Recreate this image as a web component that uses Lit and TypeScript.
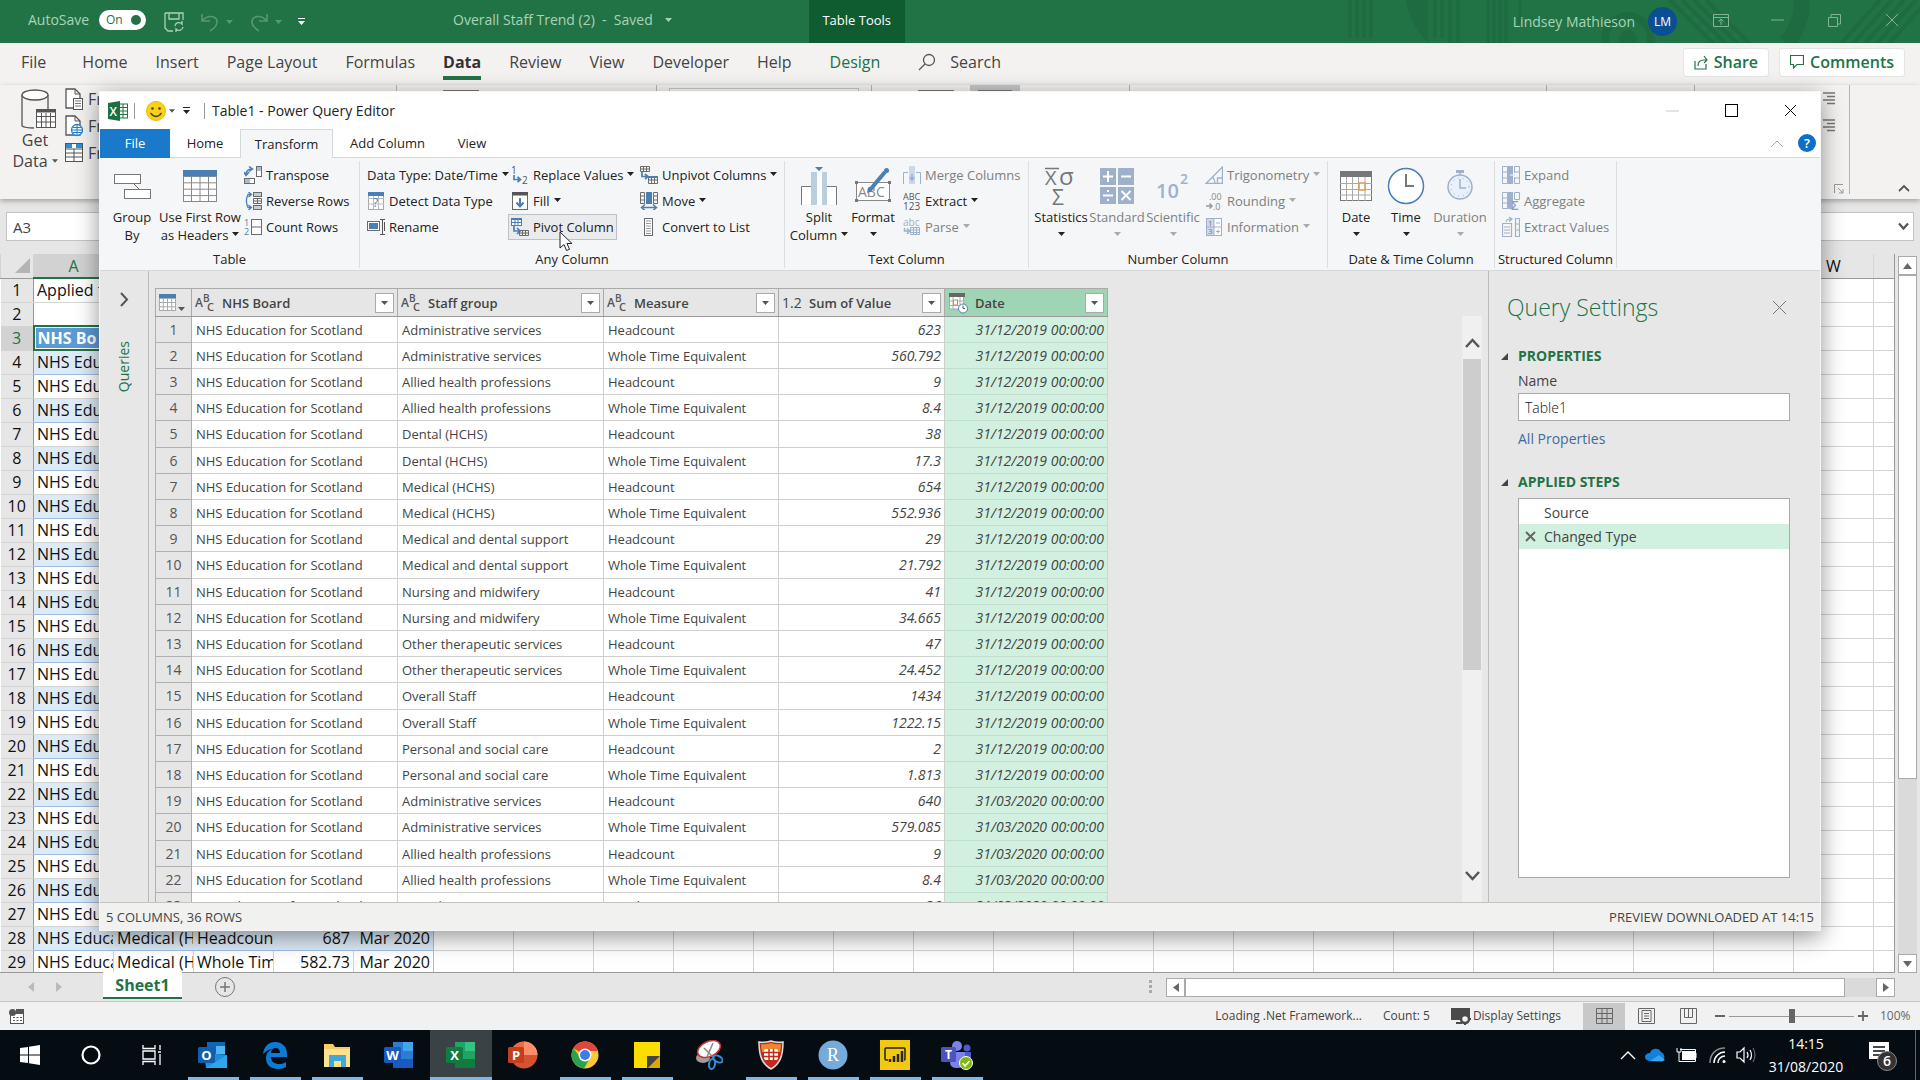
import { LitElement, html, svg, css, nothing } from "lit";
import { customElement } from "lit/decorators.js";

const B = "#4a7fb5";
const G = "#6b6b6b";
const L = "#9fb0cb";

const icon = (w: number, h: number, body: unknown) =>
  html`<svg width=${w} height=${h} viewBox="0 0 ${w} ${h}" fill="none" aria-hidden="true">${body}</svg>`;

const caret = (color = "#222", w = 7) =>
  html`<svg class="caret" width=${w} height="4" viewBox="0 0 7 4" aria-hidden="true"><path d="M0 0h7L3.500 4z" fill=${color} /></svg>`;

const xIcon = (s: number, color: string, sw = 1) =>
  icon(s, s, svg`<path d="M1 1L${s - 1} ${s - 1}M${s - 1} 1L1 ${s - 1}" stroke=${color} stroke-width=${sw} />`);

const chevUp = (color: string, sw = 1) => icon(14, 9, svg`<path d="M1 8l6-6 6 6" stroke=${color} stroke-width=${sw} />`);

const gridIcon = (w: number, h: number, c: number, r: number, line: string, head: string) => {
  const lines: unknown[] = [];
  for (let i = 1; i < c; i++) lines.push(svg`<path d="M${(w / c) * i} 1V${h - 1}" stroke=${line} />`);
  for (let i = 1; i < r; i++) lines.push(svg`<path d="M1 ${(h / r) * i}H${w - 1}" stroke=${line} />`);
  return icon(w, h, svg`<rect x=".5" y=".5" width=${w - 1} height=${h - 1} fill="#fff" stroke=${line} />${lines}<rect width=${w} height=${h / r} fill=${head} />`);
};

const ICONS: Record<string, unknown> = {
  groupBy: icon(38, 34, svg`<path d="M19 13l9 9" stroke="#666"/><rect x="1.500" y="5.500" width="26" height="9" fill="#fff" stroke="#777"/><rect x="11.500" y="20.500" width="26" height="9" fill="#fff" stroke="#777"/>`),
  firstRow: gridIcon(34, 32, 4, 5, "#888", B),
  transpose: icon(18, 18, svg`<path d="M2 9Q2 3 8 3M5 .5L8.500 3 5 5.500M-.2 6L2 9.500 5 6" stroke=${B} stroke-width="1.500"/><rect x="12.500" y=".5" width="5" height="10" fill="#fff" stroke=${G}/><rect x="13" y="1" width="4" height="4" fill="#a8bdd2"/><rect x=".5" y="12.500" width="10" height="5" fill="#fff" stroke=${G}/><rect x="1" y="13" width="5" height="4" fill="#a8bdd2"/>`),
  reverse: icon(18, 18, svg`<path d="M7 2.500H4Q.8 9 4 15.500H7M4.500 0L7.500 2.500 4.500 5M4.500 13l3 2.500-3 2.500" stroke=${B} stroke-width="1.300"/><rect x="9.500" y=".5" width="8" height="4" fill="#c0cfcb" stroke=${G}/><path d="M9.500 6.500h8v5h-8zM9.500 9h8M13.500 6.500v5" stroke=${G}/><rect x="9.500" y="13.500" width="8" height="4" fill="#c9cdd6" stroke=${G}/>`),
  count: icon(18, 18, svg`<text x="0" y="8" class="it" font-size="9" fill=${B}>1</text><text x="0" y="17" class="it" font-size="9" fill=${B}>2</text><rect x="7.500" y="1.500" width="10" height="15" fill="#fff" stroke=${G}/><path d="M7 9h11" stroke=${G}/>`),
  detect: icon(18, 18, svg`<rect x="1.500" y=".5" width="15" height="17" fill="#fff" stroke="#aaa"/><path d="M1 6.500h16M1 12h16M6.500 1v16M11.500 1v16" stroke="#bbb"/><rect x="1" width="16" height="4" fill=${B}/><text x="6" y="15" class="it" font-size="12" fill=${B}>?</text>`),
  rename: icon(18, 18, svg`<rect x=".5" y="3.500" width="12" height="9" fill="#fff" stroke=${G}/><rect x="2" y="5" width="9" height="6" fill=${B}/><path d="M13 1.500h5M13 16.500h5M15.500 2v14M17.500 4v9" stroke="#555"/>`),
  replace: icon(18, 18, svg`<text x="0" y="8" class="it" font-size="10" fill="#555">1</text><text x="11" y="18" class="it" font-size="10" fill="#555">2</text><path d="M3 9v4.500h6M6.500 11l3 2.500-3 2.500" stroke=${B} stroke-width="1.700"/>`),
  fill: icon(18, 18, svg`<rect x="1.500" y=".5" width="15" height="17" fill="#fff" stroke=${G}/><rect x="1" width="16" height="3.500" fill="#555"/><path d="M9 6v9M5.500 10.500L9 14.500l3.500-4" stroke=${B} stroke-width="2"/>`),
  pivot: icon(18, 18, svg`<rect x=".5" y=".5" width="10" height="7" fill="#fff" stroke=${B}/><path d="M0 1.500h11M1 4.500h9M4 2v5M7 2v5" stroke=${B}/><path d="M3 8v5h5M6 10l3 3-3 3" stroke=${B} stroke-width="1.700"/><path d="M8.500 12.500h9v5h-9zM8.500 15h9M11.500 12.500v5M14.500 12.500v5" stroke=${G}/>`),
  unpivot: icon(18, 18, svg`<path d="M.5 .5h9v5h-9zM.5 3h9M3.500 .5v5M6.500 .5v5" stroke=${G}/><path d="M2 6v4.500h5M5 8l3 2.500-3 2.500" stroke=${B} stroke-width="1.700"/><path d="M8.500 10.500h9v7h-9zM8.500 14h9M11.500 11v6M14.500 11v6" stroke=${G}/><path d="M8 11h10" stroke=${B} stroke-width="2"/>`),
  move: icon(18, 18, svg`<path d="M.5 .5h4v11h-4zM.5 4h4M.5 8h4M13.500 .5h4v11h-4zM13.500 4h4M13.500 8h4" stroke=${G}/><rect x="6" width="6" height="12" fill=${B}/><path d="M2 15.500h14M5 12.500l-3.500 3 3.500 3M13 12.500l3.500 3-3.500 3" stroke=${B} stroke-width="1.500"/>`),
  list: icon(18, 18, svg`<rect x="4.500" y=".5" width="8" height="17" fill="#fff" stroke=${G}/><path d="M6 3h5M6 5.500h5M6 8h5M6 10.500h5M6 13h5M6 15.500h5" stroke="#999"/>`),
  split: icon(36, 38, svg`<rect x=".5" y="19.500" width="11" height="18" fill="#fff"/><rect x="24.500" y="19.500" width="11" height="18" fill="#fff"/><path d="M.5 38V19.500H10M35.500 38V19.500H26" stroke="#777"/><rect x="10" y="5" width="6" height="33" fill="#b9cfe0"/><rect x="16" y="5" width="5" height="33" fill="#fff"/><rect x="21" y="5" width="5" height="33" fill="#b9cfe0"/><path d="M14 0h8l-4 4z" fill=${B}/>`),
  format: icon(36, 36, svg`<rect x="1.500" y="14.500" width="33" height="18" fill="#fff" stroke="#888"/><text x="3" y="29" class="it" font-size="14" fill="#888">ABC</text><path d="M0 13h3v3H0zM33 13h3v3h-3zM0 31h3v3H0zM33 31h3v3h-3z" fill="#777"/><path d="M14 23L30 4" stroke=${B} stroke-width="4"/><path d="M12 25l1-5 4 3z" fill=${B}/><circle cx="31.500" cy="2.500" r="2.500" fill=${B}/>`),
  merge: icon(18, 18, svg`<path d="M.5 18V6.500H5M17.500 18V6.500H13" stroke=${L}/><rect x="6" y="0" width="6" height="18" fill="#cdd7e8"/><path d="M9 8v5M6.500 11L9 14l2.500-3" stroke=${L} stroke-width="1.500"/>`),
  extract: icon(18, 18, svg`<text x="0" y="8" class="it" font-size="9" fill="#555">ABC</text><text x="0" y="18" class="it" font-size="10" fill="#555">123</text>`),
  parse: icon(18, 18, svg`<text x="0" y="8" class="it" font-size="10" fill=${L}>abc</text><path d="M1.500 10v3h4M4 10.500l2.500 2.500L4 16" stroke=${L} stroke-width="1.500"/><path d="M7.500 9.500h9v7h-9zM7.500 12h9M7.500 14.500h9M10.500 9.500v7M13.500 9.500v7" stroke=${L}/>`),
  stats: icon(34, 38, svg`<text x="1" y="18" class="it" font-size="20" fill="#777">X</text><path d="M1 1.500h14" stroke="#777" stroke-width="1.500"/><text x="15" y="18" class="it" font-size="24" fill="#777">σ</text><text x="8" y="38" class="it" font-size="21" fill="#777">Σ</text>`),
  standard: icon(34, 38, svg`<path d="M0 1h16v17H0zM18 1h16v17H18zM0 20h16v17H0zM18 20h16v17H18z" fill=${L}/><path d="M3 9.500h10M8 4v11M21 9.500h10M3 28.500h10M21.500 24l9 9M30.500 24l-9 9" stroke="#fff" stroke-width="2"/><path d="M7 23h2v2H7zM7 32h2v2H7z" fill="#fff"/>`),
  sci: icon(34, 38, svg`<text x="0" y="31" class="it ib" font-size="20" fill=${L}>10</text><text x="24" y="17" class="it ib" font-size="14" fill=${L}>2</text>`),
  trig: icon(18, 18, svg`<path d="M1 17.500L17.500 1v16.500zM10 17c0-3-1-4-2.500-6M12.500 17v-5h5" stroke=${L} stroke-width="1.300"/>`),
  round: icon(18, 18, svg`<text x="4" y="8" class="it" font-size="9" fill="#888">.00</text><text x="8" y="18" class="it" font-size="9" fill="#888">.0</text><path d="M1 14h6M4.500 11.500L7 14l-2.500 2.500" stroke="#999" stroke-width="1.500"/>`),
  info: icon(18, 18, svg`<rect x="1.500" y=".5" width="15" height="17" stroke=${L} fill="#fff"/><rect x="2" y="1" width="7" height="16" fill="#cfd9e8"/><path d="M9 1v16M2 9h15M11 5h4M11 13.500h4M13 11.500v4" stroke=${L}/><text x="3" y="8" class="it" font-size="8" fill="#778">1</text><text x="3" y="16" class="it" font-size="8" fill="#778">3</text>`),
  date: icon(34, 34, svg`<rect x="1.500" y="3.500" width="31" height="28" fill="#fff" stroke="#777"/><path d="M1 14.500h32M1 20.500h32M1 26h32M7.500 7v25M13.500 7v25M19.500 7v25M26 7v25" stroke="#aaa"/><rect x="1" y="2" width="32" height="6" fill="#777"/><rect x="20" y="14" width="6" height="7" fill="#fff" stroke="#d99a4e" stroke-width="1.500"/>`),
  time: icon(38, 38, svg`<circle cx="19" cy="19" r="17.500" fill="#fff" stroke=${B} stroke-width="1.500"/><path d="M19 7v12h8" stroke="#777" stroke-width="2"/>`),
  duration: icon(34, 38, svg`<circle cx="17" cy="20" r="12" fill="#e8f0fb" stroke=${L} stroke-width="1.500"/><path d="M17 12v9h6M17 5v3" stroke=${L} stroke-width="1.500"/><path d="M13 3h8v3h-8z" fill=${L}/><circle cx="17" cy="20" r="9" stroke=${L} stroke-dasharray="1 4"/>`),
  expand: icon(18, 18, svg`<path d="M.5 .5h5v17h-5zM.5 6h5M.5 12h5M12.500 .5h5v17h-5zM12.500 6h5M12.500 12h5" stroke=${L}/><path d="M6 0h5v18H6z" fill=${L}/><path d="M8 9h6M11.500 6.500L14 9l-2.500 2.500" stroke="#fff"/>`),
  aggregate: icon(18, 18, svg`<path d="M.5 .5h5v16h-5zM.5 6h5M.5 11h5M12.500 .5h5v7h-5z" stroke=${L}/><path d="M6 0h5v17H6z" fill=${L}/><text x="9" y="18" class="it ib" font-size="13" fill="#8c9dba">Σ</text>`),
  values: icon(18, 20, svg`<path d="M.5 6.500h9v13h-9zM2 10h6M2 13h6M2 16h6M13.500 1.500h4v18h-4zM13.500 7h4M13.500 13h4M4 5q0-3 5-3M7 0l3 2-3 2.500" stroke=${L} stroke-width="1.200"/>`),
};

interface Item { i?: string; t: string; c?: boolean; off?: boolean; hot?: boolean }
interface Big { i: string; l: string[]; c?: boolean; off?: boolean; w: string }
interface Group { label: string; cls: string; bigs: Big[]; cols: Item[][] }

const GROUPS: Group[] = [
  { label: "Table", cls: "g-table", bigs: [
      { i: "groupBy", l: ["Group", "By"], w: "w-m" },
      { i: "firstRow", l: ["Use First Row", "as Headers"], c: true, w: "w-l" }],
    cols: [[{ i: "transpose", t: "Transpose" }, { i: "reverse", t: "Reverse Rows" }, { i: "count", t: "Count Rows" }]] },
  { label: "Any Column", cls: "g-any", bigs: [],
    cols: [
      [{ t: "Data Type: Date/Time", c: true }, { i: "detect", t: "Detect Data Type" }, { i: "rename", t: "Rename" }],
      [{ i: "replace", t: "Replace Values", c: true }, { i: "fill", t: "Fill", c: true }, { i: "pivot", t: "Pivot Column", hot: true }],
      [{ i: "unpivot", t: "Unpivot Columns", c: true }, { i: "move", t: "Move", c: true }, { i: "list", t: "Convert to List" }]] },
  { label: "Text Column", cls: "g-text", bigs: [
      { i: "split", l: ["Split", "Column"], c: true, w: "w-m" },
      { i: "format", l: ["Format", ""], c: true, w: "w-t" }],
    cols: [[{ i: "merge", t: "Merge Columns", off: true }, { i: "extract", t: "Extract", c: true }, { i: "parse", t: "Parse", c: true, off: true }]] },
  { label: "Number Column", cls: "g-num", bigs: [
      { i: "stats", l: ["Statistics", ""], c: true, w: "w-s" },
      { i: "standard", l: ["Standard", ""], c: true, off: true, w: "w-s" },
      { i: "sci", l: ["Scientific", ""], c: true, off: true, w: "w-s" }],
    cols: [[{ i: "trig", t: "Trigonometry", c: true, off: true }, { i: "round", t: "Rounding", c: true, off: true }, { i: "info", t: "Information", c: true, off: true }]] },
  { label: "Date & Time Column", cls: "g-date", bigs: [
      { i: "date", l: ["Date", ""], c: true, w: "w-s" },
      { i: "time", l: ["Time", ""], c: true, w: "w-t" },
      { i: "duration", l: ["Duration", ""], c: true, off: true, w: "w-m" }], cols: [] },
  { label: "Structured Column", cls: "g-str", bigs: [],
    cols: [[{ i: "expand", t: "Expand", off: true }, { i: "aggregate", t: "Aggregate", off: true }, { i: "values", t: "Extract Values", off: true }]] },
];

const STAFF = ["Administrative services", "Allied health professions", "Dental (HCHS)", "Medical (HCHS)",
  "Medical and dental support", "Nursing and midwifery", "Other therapeutic services", "Overall Staff", "Personal and social care"];
const VALUES = ["623", "560.792", "9", "8.4", "38", "17.3", "654", "552.936", "29", "21.792", "41", "34.665", "47",
  "24.452", "1434", "1222.15", "2", "1.813", "640", "579.085", "9", "8.4", "36"];
const DATA = VALUES.map((v, n) => [
  "NHS Education for Scotland",
  STAFF[Math.floor((n % 18) / 2)],
  n % 2 ? "Whole Time Equivalent" : "Headcount",
  v,
  n < 18 ? "31/12/2019 00:00:00" : "31/03/2020 00:00:00",
]);

const abc = icon(20, 20, svg`<text x="0" y="14" class="it ib" font-size="12" fill="#555">A</text><text x="8" y="9" class="it ib" font-size="10" fill="#555">B</text><text x="12" y="18" class="it ib" font-size="11" fill="#555">C</text>`);
const dateType = icon(20, 22, svg`<path d="M1 2h15v15H1z" fill="#fff"/><path d="M1 9h15M1 13.500h15M5 5v12M12 5v12M1.500 5v12h14V5" stroke="#aaa"/><rect x="1" y="1" width="16" height="4" fill="#666"/><rect x="5.500" y="8" width="4" height="5" fill="#fff" stroke="#d98a2e"/><circle cx="15" cy="16.500" r="4.500" fill="#fff" stroke=${B}/><path d="M15 13.500v3h2" stroke="#555"/>`);

const COLS = [
  { name: "NHS Board", icon: abc, cls: "c-text" },
  { name: "Staff group", icon: abc, cls: "c-text" },
  { name: "Measure", icon: abc, cls: "c-measure" },
  { name: "Sum of Value", icon: html`<span class="num-type">1.2</span>`, cls: "c-num" },
  { name: "Date", icon: dateType, cls: "c-date" },
];

const reset = css`
  * { box-sizing: border-box; }
  svg { display: block; flex: none; }
  button, input { font: inherit; color: inherit; margin: 0; }
  button { background: none; border: 0; padding: 0; display: flex; align-items: center; justify-content: center; white-space: nowrap; }
  .it { font-family: "Open Sans", sans-serif; }
  .ib { font-weight: 600; }
  .grow { flex: 1; }
`;

@customElement("query-editor")
class QueryEditor extends LitElement {
  static styles = [reset, css`
    :host { display: flex; flex-direction: column; background: #fff; color: #222; font-size: 13px; line-height: 18px;
      box-shadow: 0 6px 22px rgba(0, 0, 0, 0.42); border: 1px solid #f6f6f6; }
    .title { display: flex; align-items: center; height: 37px; padding-left: 8px; font-size: 14px; }
    .sep { width: 1px; height: 16px; background: #999; margin: 0 7px 0 6px; }
    .qat { margin: 0 8px; }
    .smile { gap: 3px; margin-left: 4px; }
    .wb { width: 59px; height: 36px; }
    .tabs { display: flex; height: 29px; border-bottom: 1px solid #d5d8d8; }
    .tabs button { height: 29px; width: 70px; padding-bottom: 1px; }
    .tabs .file { background: #1979ca; color: #fff; }
    .tabs .on { width: 93px; background: #f5f6f7; border: 1px solid #d5d8d8; border-bottom: 0; }
    .tabs .wide { width: 109px; }
    .tabs .view { width: 60px; }
    .tabs .fold { width: 34px; }
    .tabs .help { width: 18px; height: 18px; padding: 0; border-radius: 50%; background: #0e6fc8; color: #fff; font-weight: 600; align-self: center; margin: 0 4px 0 4px; }
    .ribbon { display: flex; height: 113px; padding-top: 3px; background: #f5f6f7; border-bottom: 1px solid #d5d8d8; overflow: hidden; }
    .group { display: flex; flex-direction: column; flex: none; height: 107px; border-right: 1px solid #dcdfdf; }
    .tools { display: flex; height: 89px; }
    .glabel { text-align: center; height: 18px; }
    .g-table { width: 260px; }
    .g-any { width: 425px; }
    .g-text { width: 244px; }
    .g-num { width: 299px; }
    .g-date { width: 167px; }
    .g-str { width: 122px; }
    .big { flex-direction: column; justify-content: flex-start; flex: none; padding-top: 5px; height: 86px; }
    .big .pic { height: 39px; display: flex; align-items: center; }
    .big .l { display: flex; align-items: center; gap: 4px; height: 18px; }
    .big .l.first { padding-top: 3px; height: 21px; }
    .big .l .caret { margin-top: -2px; }
    .w-s { width: 56px; } .w-t { width: 44px; } .w-m { width: 64px; } .w-l { width: 72px; }
    .col { display: flex; flex-direction: column; padding-top: 1px; }
    .row { height: 26px; justify-content: flex-start; gap: 4px; padding: 0 2px; border: 1px solid transparent; position: relative; }
    .row .caret { margin-top: -2px; }
    .row.hot { background: #e9ebec; border-color: #bfc2c2; }
    .off { color: #7d8080; }
    .g-any .col { width: 129px; align-items: flex-start; }
    .g-any .tools { padding-left: 4px; }
    .g-any .col:first-child { width: 144px; }
    .g-table .col, .g-text .col { padding-left: 5px; }
    .g-num .tools { padding-left: 4px; }
    .g-num .col { padding-left: 1px; }
    .g-text .tools { padding-left: 2px; }
    .g-str .tools { padding-left: 4px; }
    .pointer { position: absolute; left: 50px; top: 16px; z-index: 2; }
    .body { display: flex; flex: 1; min-height: 0; background: #e7e7e7; }
    .queries { width: 49px; flex: none; border-right: 1px solid #bbb; display: flex; flex-direction: column; align-items: center; padding-top: 21px; gap: 34px; }
    .queries span { writing-mode: vertical-rl; transform: rotate(180deg); color: #217346; font-size: 14px; }
    .data { flex: 1; min-width: 0; display: flex; overflow: hidden; padding: 17px 6px 0 6px; }
    .tablewrap { flex: 1; min-width: 0; overflow: hidden; }
    table { border-collapse: collapse; table-layout: fixed; width: 952px; }
    th, td { padding: 0 4px; border: 1px solid #d0d0d0; font-weight: 400; text-align: left; overflow: hidden; white-space: nowrap; color: #444; }
    thead th { height: 28px; background: #e6e6e6; border-color: #aaa; border-bottom: 1px solid #999; font-weight: 600; padding: 0 3px; }
    tbody tr { height: 26px; background: #fff; }
    tbody tr:nth-child(5n) { height: 27px; }
    tbody th { background: #e6e6e6; text-align: center; font-size: 14px; color: #555; border-color: #b0b0b0; }
    .c-idx { width: 36px; } .c-text { width: 206px; } .c-measure { width: 175px; } .c-num { width: 166px; } .c-date { width: 163px; }
    td.r { text-align: right; font-style: italic; font-size: 14px; padding-right: 3px; }
    td.d { background: #d2f0df; border-color: #c3dccd; }
    thead th.sel { background: #9fd5b5; }
    .hd { display: flex; align-items: center; gap: 7px; }
    .hd button { margin-left: auto; width: 19px; height: 20px; background: #fff; border: 1px solid #aaa; }
    .num-type { font-weight: 400; font-size: 14px; width: 20px; }
    .corner { gap: 2px; }
    .corner .caret { align-self: flex-end; }
    .vbar { width: 20px; flex: none; margin-top: 28px; background: #f0f0f0; display: flex; flex-direction: column; }
    .vbar button { height: 43px; padding-top: 10px; }
    .vbar .down { padding: 0; height: 52px; }
    .vbar i { flex: 0 1 311px; background: #cdcdcd; margin: 0 1px; }
    .settings { width: 332px; flex: none; border-left: 1px solid #bbb; padding: 19px 30px 24px 12px; display: flex; flex-direction: column; font-size: 14px; line-height: 20px; color: #444; }
    .shead { display: flex; align-items: center; justify-content: space-between; padding: 0 3px 0 6px; height: 34px; }
    h2 { margin: 0; font-size: 23px; font-weight: 300; color: #217346; line-height: 32px; }
    h3 { margin: 0; font-size: 14px; font-weight: 700; color: #217346; display: flex; align-items: center; gap: 10px; }
    .p1 { margin-top: 22px; }
    .p2 { margin-top: 23px; margin-bottom: 6px; }
    .in { margin-left: 17px; }
    label { margin-top: 5px; }
    .name { height: 28px; margin-top: 2px; border: 1px solid #aaa; background: #fff; padding: 0 6px; font-weight: 300; color: #111; border-radius: 0; }
    a { color: #3f6a9f; text-decoration: none; margin-top: 8px; align-self: flex-start; }
    .steps { flex: 1; margin-top: 0; margin-bottom: 0; padding: 0; list-style: none; background: #fff; border: 1px solid #aaa; }
    .steps li { height: 25px; padding-left: 6px; display: flex; align-items: center; gap: 8px; }
    .steps li:first-child { padding-left: 25px; padding-top: 2px; }
    .steps .cur { background: #d2f0df; }
    .foot { height: 28px; flex: none; border-top: 1px solid #c3c3c3; background: #f1f1f0; display: flex; justify-content: space-between; align-items: center; padding: 0 6px; color: #444; }
  `];

  private big(b: Big) {
    return html`<button class="big ${b.w} ${b.off ? "off" : ""}">
      <span class="pic">${ICONS[b.i]}</span>
      <span class="l first">${b.l[0]}</span>
      <span class="l">${b.l[1]}${b.c ? caret(b.off ? "#aaa" : "#222") : nothing}</span>
    </button>`;
  }

  private row(r: Item) {
    return html`<button class="row ${r.off ? "off" : ""} ${r.hot ? "hot" : ""}">
      ${r.i ? ICONS[r.i] : nothing}<span>${r.t}</span>${r.c ? caret(r.off ? "#aaa" : "#222") : nothing}
      ${r.hot ? html`<svg class="pointer" width="14" height="21" viewBox="0 0 14 21"><path d="M1 1v16l4-3.500 2.500 6 3-1.200L8 12.500h5z" fill="#fff" stroke="#222" /></svg>` : nothing}
    </button>`;
  }

  render() {
    const tri = icon(7, 7, svg`<path d="M7 0v7H0z" fill="#444"/>`);
    return html`
      <header class="title">
        ${icon(20, 20, svg`<rect x="10" y="3" width="9.500" height="14" fill="#fff" stroke="#217346"/><path d="M11 6.500h8M11 10h8M11 13.500h8M15 3v14" stroke="#217346"/><path d="M0 2l12-2v20L0 18z" fill="#1d6f42"/><text x="1.500" y="14.500" class="it ib" font-size="12" fill="#fff">X</text>`)}
        <span class="sep"></span>
        <button class="smile" aria-label="Send a smile">
          ${icon(20, 20, svg`<circle cx="10" cy="10" r="9.500" fill="#fbd116" stroke="#e8b90c"/><circle cx="6.500" cy="7.500" r="1.300" fill="#443"/><circle cx="13.500" cy="7.500" r="1.300" fill="#443"/><path d="M4.500 12q5.500 7 11 0" stroke="#443" stroke-width="1.300"/>`)}
          ${caret("#555", 6)}
        </button>
        <button class="qat" aria-label="Customize">${icon(7, 7, svg`<path d="M0 .5h7" stroke="#222"/><path d="M0 3h7L3.500 7z" fill="#222"/>`)}</button>
        <span class="sep"></span>
        <span>Table1 - Power Query Editor</span>
        <span class="grow"></span>
        <button class="wb" aria-label="Minimize">${icon(13, 2, svg`<path d="M0 1h13" stroke="#ccc"/>`)}</button>
        <button class="wb" aria-label="Maximize">${icon(13, 13, svg`<rect x=".5" y=".5" width="12" height="12" stroke="#000"/>`)}</button>
        <button class="wb" aria-label="Close">${xIcon(13, "#000")}</button>
      </header>
      <nav class="tabs">
        <button class="file">File</button><button>Home</button><button class="on">Transform</button>
        <button class="wide">Add Column</button><button class="view">View</button>
        <span class="grow"></span>
        <button class="fold" aria-label="Collapse ribbon">${chevUp("#aaa")}</button>
        <button class="help" aria-label="Help">?</button>
      </nav>
      <div class="ribbon">
        ${GROUPS.map((g) => html`<section class="group ${g.cls}">
          <div class="tools">${g.bigs.map((b) => this.big(b))}${g.cols.map((c) => html`<div class="col">${c.map((r) => this.row(r))}</div>`)}</div>
          <div class="glabel">${g.label}</div>
        </section>`)}
      </div>
      <div class="body">
        <aside class="queries">
          <button aria-label="Expand queries">${icon(9, 15, svg`<path d="M1 1l6 6.500L1 14" stroke="#555" stroke-width="2"/>`)}</button>
          <span>Queries</span>
        </aside>
        <main class="data">
          <div class="tablewrap">
            <table>
              <thead><tr>
                <th class="c-idx"><button class="corner" aria-label="Table menu">${gridIcon(17, 17, 4, 4, "#aaa", B)}${caret("#555", 7)}</button></th>
                ${COLS.map((c) => html`<th class="${c.cls} ${c.cls === "c-date" ? "sel" : ""}"><div class="hd">${c.icon}<span>${c.name}</span><button aria-label="Filter ${c.name}">${caret("#555", 9)}</button></div></th>`)}
              </tr></thead>
              <tbody>
                ${DATA.map((r, n) => html`<tr><th>${n + 1}</th>${r.map((v, k) => html`<td class=${k === 4 ? "r d" : k === 3 ? "r" : ""}>${v}</td>`)}</tr>`)}
              </tbody>
            </table>
          </div>
          <div class="vbar">
            <button aria-label="Scroll up">${icon(15, 11, svg`<path d="M1 10l6.500-7 6.500 7" stroke="#555" stroke-width="2.500"/>`)}</button>
            <i></i><span class="grow"></span>
            <button class="down" aria-label="Scroll down">${icon(15, 11, svg`<path d="M1 1l6.500 7L14 1" stroke="#555" stroke-width="2.500"/>`)}</button>
          </div>
        </main>
        <aside class="settings">
          <div class="shead"><h2>Query Settings</h2><button aria-label="Close settings">${xIcon(15, "#777")}</button></div>
          <h3 class="p1">${tri}PROPERTIES</h3>
          <label class="in" for="qname">Name</label>
          <input class="in name" id="qname" .value=${"Table1"} />
          <a class="in" href="#">All Properties</a>
          <h3 class="p2">${tri}APPLIED STEPS</h3>
          <ul class="steps in">
            <li>Source</li>
            <li class="cur">${xIcon(11, "#666", 2)}Changed Type</li>
          </ul>
        </aside>
      </div>
      <footer class="foot"><span>5 COLUMNS, 36 ROWS</span><span>PREVIEW DOWNLOADED AT 14:15</span></footer>
    `;
  }
}

const letters = "ABCDEFGHIJKLMNOPQRSTUVWX".split("");
const sheetRow = (r: number): string[] => {
  if (r === 1) return ["Applied f"];
  if (r === 2) return [];
  if (r === 3) return ["NHS Bo"];
  if (r === 28) return ["NHS Education", "Medical (HCHS)", "Headcount", "687", "Mar 2020"];
  if (r === 29) return ["NHS Education", "Medical (HCHS)", "Whole Time", "582.73", "Mar 2020"];
  return ["NHS Education"];
};

const office = (c1: string, c2: string, c3: string, l: string) =>
  icon(30, 28, svg`<path d="M9 1h20v26H9z" fill=${c1}/><path d="M19 1h10v9H19z" fill=${c3}/><path d="M9 18h20v9H9z" fill=${c2}/><rect x="0" y="6" width="17" height="16" rx="1.500" fill=${c2}/><text x="8.500" y="19" text-anchor="middle" class="it" font-weight="700" font-size="13" fill="#fff">${l}</text>`);

const TASKS: { n: string; i: unknown; run?: boolean; on?: boolean }[] = [
  { n: "Outlook", run: true, i: icon(30, 28, svg`<path d="M9 1h18v14H9z" fill="#1066b5"/><path d="M18 5h9v8h-9z" fill="#50b5f0"/><path d="M6 12l23 2v13H8z" fill="#1a8fdd"/><path d="M8 27l21-13v13z" fill="#2fa6ec"/><rect y="6" width="17" height="16" rx="1.500" fill="#0f5fae"/><text x="8.500" y="19" text-anchor="middle" class="it" font-weight="700" font-size="13" fill="#fff">O</text>`) },
  { n: "Edge", run: true, i: icon(26, 28, svg`<path d="M1 13C2 5 7 1 13 1c8 0 12 6 12 12v3H9c0 5 4 7 8 7 3 0 5-.6 7-2v5c-2 1-5 2-8 2C9 28 4 24 4 17c0-4 2-7 6-9-3 .5-6 2-9 5zm8-1h9c0-3-1.500-5-4.500-5S9 9 9 12z" fill="#0c7bd6"/>`) },
  { n: "File Explorer", run: true, i: icon(28, 26, svg`<path d="M1 2h9l2 3h15v20H1z" fill="#f6cf60"/><path d="M1 7h26v18H1z" fill="#fde28f"/><path d="M6 13h17v12h-5v-6h-7v6H6z" fill="#3fa9dc"/>`) },
  { n: "Word", i: office("#2b7cd3", "#185abd", "#41a5ee", "W") },
  { n: "Excel", run: true, on: true, i: office("#21a366", "#107c41", "#33c481", "X") },
  { n: "PowerPoint", i: icon(30, 28, svg`<circle cx="16" cy="14" r="13.500" fill="#d35230"/><path d="M16 .5A13.500 13.500 0 0129.500 14H16z" fill="#ff8f6b"/><path d="M16 .5A13.500 13.500 0 004 8l12 6z" fill="#ed6c47"/><rect y="6" width="16" height="16" rx="1.500" fill="#c43e1c"/><text x="8" y="19" text-anchor="middle" class="it" font-weight="700" font-size="13" fill="#fff">P</text>`) },
  { n: "Chrome", run: true, i: icon(28, 28, svg`<circle cx="14" cy="14" r="13.500" fill="#fcc934"/><path d="M14 14L2.300 7.300A13.500 13.500 0 0125.700 7.300L27 10H14z" fill="#e0473a"/><path d="M2.300 7.300A13.500 13.500 0 0013 27.500L19 17l-9 0z" fill="#2da24e"/><circle cx="14" cy="14" r="6.500" fill="#fff"/><circle cx="14" cy="14" r="5" fill="#3b7de9"/>`) },
  { n: "Sticky Notes", run: true, i: icon(28, 28, svg`<path d="M1 1h26v14L15 27H1z" fill="#fddc00"/><path d="M14 15h13L15 27h-1z" fill="#444"/><path d="M27 15v12H15z" fill="#d9a900"/>`) },
  { n: "Snipping Tool", i: icon(28, 30, svg`<ellipse cx="8" cy="18" rx="7" ry="5" fill="#a99" /><ellipse cx="14" cy="9" rx="12" ry="7.500" transform="rotate(-25 14 9)" fill="#fff" stroke="#c9323a" stroke-width="1.500"/><path d="M18 3l-6 14M9 8l10 10" stroke="#888" stroke-width="1.500"/><ellipse cx="23" cy="19" rx="5" ry="3" transform="rotate(30 23 19)" stroke="#2d8fd6" stroke-width="2"/><ellipse cx="17" cy="24" rx="3" ry="5" transform="rotate(10 17 24)" stroke="#2d8fd6" stroke-width="2"/>`) },
  { n: "Security", run: true, i: icon(26, 30, svg`<path d="M13 1q6 2 12 1c0 14-3 22-12 27C4 24 1 16 1 2q6 1 12-1z" fill="#c22a1c" stroke="#ddd" stroke-width="1.500"/><path d="M13 3q5 2 10 1 0 4-1 8H4Q3 8 3 4q5 1 10-1z" fill="#e88a2a"/><rect x="6" y="9" width="14" height="11" rx="2" fill="#fff"/><path d="M6 12.500h14M6 16.500h14M11 9v11M15.500 9v11" stroke="#c22a1c" stroke-width="1.500"/>`) },
  { n: "RStudio", run: true, i: icon(30, 30, svg`<circle cx="15" cy="15" r="14.500" fill="#75aadb"/><text x="15" y="21" text-anchor="middle" font-family="Liberation Serif, serif" font-size="18" fill="#fff">R</text>`) },
  { n: "Power BI", run: true, i: icon(30, 30, svg`<rect width="30" height="30" fill="#f2c811"/><path d="M8 20H6q-1 0-1-1V9q0-1 1-1h18q1 0 1 1v10q0 1-1 1" stroke="#222" stroke-width="1.500"/><path d="M10 22v-3M14 22v-6M18 22v-8M22 22V11" stroke="#222" stroke-width="2.500"/>`) },
  { n: "Teams", run: true, i: icon(32, 30, svg`<circle cx="16" cy="6" r="5" fill="#7b83eb"/><circle cx="26" cy="8" r="3.500" fill="#5059c9"/><path d="M20 12h10v10q-4 4-8 1z" fill="#5059c9"/><path d="M9 12h15v10q-1 6-8 6t-7-6z" fill="#7b83eb"/><rect y="7" width="15" height="15" rx="1.500" fill="#4b53bc"/><text x="7.500" y="19" text-anchor="middle" class="it" font-weight="700" font-size="12" fill="#fff">T</text><circle cx="25" cy="23" r="6.500" fill="#7fba00" stroke="#fff"/><path d="M21.500 23l2.500 3 4.500-5" stroke="#fff" stroke-width="1.800"/>`) },
];

const listIcon = icon(14, 13, svg`<path d="M2 1h12M6 4.500h8M2 8h12M6 11.500h8" stroke="#777" stroke-width="1.300"/>`);

@customElement("app-root")
class AppRoot extends LitElement {
  static styles = [reset, css`
    :host { display: flex; flex-direction: column; height: 100vh; position: relative; overflow: hidden; background: #e6e6e6; font-family: "Open Sans", "Segoe UI", sans-serif; color: #333; font-size: 16px; line-height: 22px; }
    .titlebar { flex: none; height: 43px; background: #217346; color: #a9d3b8; display: flex; align-items: center; font-size: 14px; position: relative; padding-bottom: 3px; }
    .deco { position: absolute; right: 0; top: 0; }
    .auto { display: flex; align-items: center; gap: 7px; padding-left: 28px; font-size: 14px; width: 146px; }
    .toggle { position: relative; width: 47px; height: 20px; border-radius: 10px; background: #fff; color: #217346; font-size: 12px; line-height: 20px; padding-left: 7px; flex: none; margin-left: auto; }
    .toggle input { appearance: none; position: absolute; right: 5px; top: 5px; width: 10px; height: 10px; border-radius: 50%; background: #217346; }
    .qa { display: flex; align-items: center; gap: 16px; margin-left: 18px; padding-top: 3px; }
    .qa button { gap: 6px; }
    .doc { gap: 12px; margin-left: 148px; font-size: 14px; }
    .ctx { margin-left: 137px; width: 96px; height: 43px; margin-bottom: -3px; padding-bottom: 4px; background: #0f5c30; color: #fff; font-size: 13px; display: flex; align-items: center; justify-content: center; }
    .user { z-index: 1; gap: 13px; font-size: 14px; padding-top: 3px; margin-right: 15px; }
    .av { width: 29px; height: 29px; border-radius: 50%; background: #0b4f93; color: #fff; font-size: 12px; display: flex; align-items: center; justify-content: center; }
    .win { width: 57px; height: 40px; z-index: 1; }
    .menus { flex: none; display: flex; align-items: center; height: 42px; background: #f3f2f1; padding: 0 15px 4px 21px; gap: 28px; color: #444; }
    .menus button { height: 35px; }
    .menus .file { margin-right: 8px; }
    .menus .data { font-weight: 700; box-shadow: inset 0 -4px #217346; color: #333; }
    .menus .design { margin: 0 10px; color: #217346; }
    .menus .find { gap: 14px; }
    .menus .act { background: #fff; color: #217346; font-weight: 600; height: 29px; padding: 0 10px; gap: 6px; border-radius: 3px; border: 1px solid #e4e4e4; }
    .menus .act + .act { margin-left: -18px; }
    .strip { flex: none; height: 114px; background: #f3f2f1; display: flex; box-shadow: 0 2px 5px rgba(0, 0, 0, 0.3); z-index: 1; }
    .sg { border-right: 1px solid #b5b5b5; height: 109px; display: flex; align-items: flex-start; flex: none; }
    .sg.a { width: 397px; padding-left: 14px; } .sg.b { width: 260px; } .sg.c { width: 215px; } .sg.d { width: 258px; }
    .sg.e { width: 417px; } .sg.f { width: 148px; } .sg.g { width: 155px; }
    .get { flex-direction: column; width: 42px; padding-top: 4px; color: #444; }
    .get span { display: flex; align-items: center; gap: 4px; line-height: 22px; height: 21px; }
    .from { display: flex; flex-direction: column; padding: 0 0 0 9px; }
    .from button { height: 27px; gap: 5px; justify-content: flex-start; color: #444; }
    .combo { margin: 3px 0 0 12px; width: 190px; height: 20px; border: 1px solid #c6c6c6; background: #f8f8f8; }
    .bar { height: 6px; width: 36px; background: #777; margin: 5px 0 0 46px; }
    .pressed { margin-left: 16px; width: 50px; height: 20px; background: #c5c5c5; border-top: 5px solid #c5c5c5; }
    .pressed i { display: block; height: 6px; margin: 0 8px; background: #777; }
    .lists { display: flex; flex-direction: column; gap: 14px; margin-left: auto; padding: 7px 14px 0 0; position: relative; height: 109px; }
    .launch { margin-top: auto; margin-right: -9px; align-self: flex-end; }
    .fold { margin: 99px 10px 0 auto; align-self: flex-start; }
    .formula { flex: none; height: 55px; display: flex; align-items: center; padding: 0 6px; gap: 12px; }
    .formula input { width: 110px; height: 29px; border: 1px solid #c4c4c4; background: #fff; padding: 0 6px; color: #444; font-size: 15px; border-radius: 0; }
    .fx { flex: 1; height: 29px; background: #fff; border: 1px solid #c4c4c4; display: flex; align-items: center; justify-content: flex-end; padding-right: 4px; }
    .sheet { flex: 1; min-height: 0; display: flex; }
    .cells { flex: 1; min-width: 0; overflow: hidden; border-right: 1px solid #999; border-bottom: 1px solid #999; background: #fff; }
    table { border-collapse: collapse; table-layout: fixed; width: 1953px; color: #111; }
    th, td { height: 24px; border: 1px solid #d4d4d4; padding: 0 3px; font-weight: 400; overflow: hidden; white-space: nowrap; text-align: left; line-height: 22px; }
    thead th { text-align: center; background: #e6e6e6; border-top: 0; height: 24px; border-bottom-color: #999; }
    tbody th { text-align: center; background: #e6e6e6; padding: 0; border-right-color: #999; border-left: 0; }
    .idx { width: 33px; } .cw { width: 80px; }
    thead th.idx { padding: 0 3px 0 0; }
    .idx svg { margin-left: auto; }
    th.hi { background: #d2d2d2; color: #217346; }
    thead th.hi { border-bottom: 2px solid #217346; }
    td.band { background: #ddebf7; border-color: #9bc2e6; border-left-color: #ddebf7; border-right-color: #ddebf7; }
    td.last { border-right-color: #9bc2e6; }
    td.act { background: #5b9bd5; color: #fff; font-weight: 700; border: 2px solid #217346; box-shadow: inset 0 0 0 1px #fff; line-height: 20px; }
    td.n { text-align: right; }
    .vs { width: 25px; flex: none; padding: 2px 3px 0; display: flex; flex-direction: column; }
    .vs button, .hs button { background: #fff; border: 1px solid #aaa; width: 19px; height: 19px; flex: none; }
    .vs i { flex: 0 1 504px; background: #fff; border: 1px solid #aaa; }
    .vs b { flex: 1; background: #dadada; min-height: 20px; }
    .tabsbar { flex: none; height: 29px; display: flex; align-items: center; padding-right: 25px; border-bottom: 1px solid #c6c6c6; }
    .arrows { display: flex; gap: 22px; width: 103px; padding-left: 28px; }
    .tab { align-self: flex-start; width: 79px; height: 27px; margin-top: -1px; background: #fff; color: #217346; font-weight: 700; font-size: 16px; border-bottom: 2px solid #217346; }
    .plus { margin-left: 33px; }
    .hs { display: flex; width: 729px; height: 19px; margin-left: 14px; }
    .hs i { flex: 1; background: #fff; border: 1px solid #aaa; } .hs b { width: 31px; background: #dadada; }
    .status { flex: none; height: 28px; background: #f1f1f1; display: flex; align-items: center; padding-left: 9px; font-size: 12px; color: #444; }
    .status .count { margin: 0 21px; }
    .status .disp { gap: 2px; margin-right: 22px; }
    .status .view { width: 42px; height: 27px; } .status .view.on { background: #c8c8c8; }
    .status .out { margin-left: 6px; }
    .zoom { appearance: none; width: 125px; height: 16px; margin: 0 4px; background: linear-gradient(#999, #999) center / 100% 1px no-repeat; }
    .zoom::-webkit-slider-thumb { appearance: none; width: 6px; height: 14px; background: #666; }
    .status .pct { width: 52px; padding-left: 12px; color: #666; }
    .taskbar { flex: none; height: 50px; background: #050d13; display: flex; color: #fff; }
    .sys { width: 61px; }
    .sys:first-child { width: 60px; }
    .app { width: 62px; position: relative; }
    .app.on { background: #3a4246; }
    .app.run { background-image: linear-gradient(#7cb8e8, #7cb8e8); background-size: 51px 3px; background-position: center bottom; background-repeat: no-repeat; }
    .app.on.run { background-size: 100% 3px; }
    .tray { display: flex; align-items: center; gap: 9px; }
    .clock { flex-direction: column; font-size: 14px; line-height: 23px; width: 82px; }
    .note { margin: 0 14px 0 18px; width: 36px; }
    .edge { width: 1px; background: #666; margin-right: 4px; }
    query-editor { position: absolute; inset: 91px 99px 149px 99px; z-index: 3; }
  `];

  render() {
    const doc = (extra: unknown) => icon(18, 22, svg`<path d="M1 1h9l5 5v14H1z" fill="#fff" stroke="#555" stroke-width="1.300"/><path d="M10 1v5h5" stroke="#555"/>${extra}`);
    return html`
      <header class="titlebar">
        <svg class="deco" width="580" height="43" viewBox="0 0 580 43" fill="none" aria-hidden="true">
          <path d="M10 0v38M17 0v38M24 0v38M31 0v38M95 0v38M102 0v38M110 0v43M118 0v43M148 0v43M154 0v43M160 0v43M166 0v43M180 0v25" stroke="#1f6b41" stroke-width="3" />
          <path d="M66 0h22v43q-18-18-22-43z" fill="#1f6b41" />
          <circle cx="288" cy="39" r="23" stroke="#1f6b41" stroke-width="8" /><circle cx="288" cy="39" r="9" fill="#1f6b41" />
          <path d="M330 0l50 50M342 0l50 50M354 0l50 50M366 0l50 50" stroke="#1f6b41" stroke-width="4" />
          <path d="M462 0q0 25-16 43" stroke="#1f6b41" stroke-width="16" />
          <path d="M540 0l-45 50M552 0l-45 50M564 0l-45 50M576 0l-45 50M588 0l-45 50" stroke="#1f6b41" stroke-width="4" />
        </svg>
        <div class="auto"><span>AutoSave</span><label class="toggle">On<input type="checkbox" checked aria-label="AutoSave" /></label></div>
        <div class="qa">
          <button aria-label="Save">${icon(20, 20, svg`<path d="M1 1h18v7M1 1v15l3 3h5M5 1v6h10V1" stroke="#a9d3b8" stroke-width="1.300"/><path d="M11 14a4 4 0 017-2v-3M19 15a4 4 0 01-7 2v3" stroke="#a9d3b8" stroke-width="1.300"/>`)}</button>
          <button aria-label="Undo">${icon(20, 20, svg`<path d="M2 2v7h8M2 9C8 2 16 4 17 9s-4 8-7 10" stroke="#57996f" stroke-width="1.600"/>`)}${caret("#57996f")}</button>
          <button aria-label="Redo">${icon(20, 20, svg`<path d="M18 2v7h-8M18 9C12 2 4 4 3 9s4 8 7 10" stroke="#57996f" stroke-width="1.600"/>`)}${caret("#57996f")}</button>
          <button aria-label="Customize toolbar">${icon(7, 7, svg`<path d="M0 .5h7" stroke="#fff"/><path d="M0 3h7L3.500 7z" fill="#fff"/>`)}</button>
        </div>
        <button class="doc">Overall Staff Trend (2)&nbsp; -&nbsp; Saved ${caret("#a9d3b8")}</button>
        <div class="ctx">Table Tools</div>
        <span class="grow"></span>
        <button class="user">Lindsey Mathieson<span class="av">LM</span></button>
        <button class="win" aria-label="Ribbon display">${icon(16, 13, svg`<path d="M.5 .5h15v12H.5zM.5 3.500h15M8 11V5M5.500 7.500L8 5l2.500 2.500" stroke="#7fb594"/>`)}</button>
        <button class="win" aria-label="Minimize">${icon(13, 2, svg`<path d="M0 1h13" stroke="#7fb594"/>`)}</button>
        <button class="win" aria-label="Restore">${icon(13, 13, svg`<path d="M.5 3.500h9v9h-9zM3 3V.5h9.500V10H10" stroke="#7fb594"/>`)}</button>
        <button class="win" aria-label="Close">${xIcon(14, "#7fb594")}</button>
      </header>
      <nav class="menus">
        <button class="file">File</button><button>Home</button><button>Insert</button><button>Page Layout</button><button>Formulas</button>
        <button class="data">Data</button><button>Review</button><button>View</button><button>Developer</button><button>Help</button>
        <button class="design">Design</button>
        <button class="find">${icon(18, 18, svg`<circle cx="11" cy="7" r="5.500" stroke="#555" stroke-width="1.300"/><path d="M7 11l-6 6" stroke="#555" stroke-width="1.300"/>`)}Search</button>
        <span class="grow"></span>
        <button class="act">${icon(14, 15, svg`<path d="M1 6v8h11V9M4 11q0-6 6-6h3M10 1l3 4-3 3" stroke="#217346" stroke-width="1.200"/>`)}Share</button>
        <button class="act">${icon(14, 14, svg`<path d="M.5 .5h13v9H7L3.500 13V9.500h-3z" stroke="#217346" stroke-width="1.200"/>`)}Comments</button>
      </nav>
      <div class="strip">
        <div class="sg a">
          <button class="get">
            ${icon(42, 40, svg`<path d="M8 6v31q3 2 12 2M34 6v14" stroke="#555" stroke-width="1.300"/><ellipse cx="21" cy="6" rx="13" ry="5" fill="#fff" stroke="#555" stroke-width="1.300"/><rect x="22.500" y="20.500" width="19" height="18" fill="#fff" stroke="#555"/><path d="M22 22h20" stroke="#555" stroke-width="3"/><path d="M22 27.500h19M22 33h19M27.500 24v14M32 24v14M36.500 24v14" stroke="#555"/>`)}
            <span>Get</span><span>Data ${caret("#555", 6)}</span>
          </button>
          <div class="from">
            <button>${doc(svg`<rect x="8.500" y="10.500" width="9" height="11" fill="#fff" stroke="#555"/><path d="M10 13h6M10 15.500h6M10 18h6" stroke="#777"/>`)}From</button>
            <button>${doc(svg`<circle cx="12" cy="15" r="5.500" fill="#fff" stroke="#1e7fd0" stroke-width="1.300"/><path d="M6.500 15h11M12 9.500v11M8 12.500h8M8 17.500h8" stroke="#1e7fd0"/>`)}From</button>
            <button>${icon(18, 20, svg`<rect x=".5" y=".5" width="17" height="18" fill="#fff" stroke="#555"/><path d="M1 3h16" stroke="#2e8fd8" stroke-width="4" stroke-dasharray="6 4"/><path d="M1 6h16M1 10h16M1 14h16M9 6v12" stroke="#555"/>`)}From</button>
          </div>
        </div>
        <div class="sg b"><div class="bar"></div></div>
        <div class="sg c"><div class="combo"></div></div>
        <div class="sg d"><div class="bar"></div><div class="pressed"><i></i></div></div>
        <div class="sg e"></div><div class="sg f"></div>
        <div class="sg g"><div class="lists">${listIcon}${listIcon}<span class="launch">${icon(10, 10, svg`<path d="M.5 9V.5H9M4 4l5 5M9 5v4H5" stroke="#999"/>`)}</span></div></div>
        <button class="fold" aria-label="Collapse ribbon">${icon(12, 9, svg`<path d="M1 7l5-5 5 5" stroke="#555" stroke-width="1.800"/>`)}</button>
      </div>
      <div class="formula"><input aria-label="Name box" .value=${"A3"} /><div class="fx">${icon(11, 9, svg`<path d="M1 1.500l4.500 5 4.500-5" stroke="#555" stroke-width="2.200"/>`)}</div></div>
      <div class="sheet">
        <div class="cells">
          <table>
            <thead><tr><th class="idx">${icon(15, 15, svg`<path d="M15 0v15H0z" fill="#b4b4b4"/>`)}</th>${letters.map((l, n) => html`<th class="cw ${n === 0 ? "hi" : ""}">${l}</th>`)}</tr></thead>
            <tbody>
              ${Array.from({ length: 29 }, (_, k) => k + 1).map((r) => {
                const v = sheetRow(r);
                return html`<tr><th class=${r === 3 ? "hi" : ""}>${r}</th>${letters.map((_, c) => {
                  const cls = [r === 3 && c === 0 ? "act" : "", r > 3 && r % 2 === 0 && c < 5 ? "band" : "", c === 4 && r > 3 ? "last" : "", c === 3 || c === 4 ? "n" : ""].join(" ");
                  return html`<td class=${cls}>${v[c] ?? nothing}</td>`;
                })}</tr>`;
              })}
            </tbody>
          </table>
        </div>
        <div class="vs">
          <button aria-label="Up">${icon(9, 6, svg`<path d="M0 6l4.500-6L9 6z" fill="#666"/>`)}</button><i></i><b></b>
          <button aria-label="Down">${icon(9, 6, svg`<path d="M0 0h9L4.500 6z" fill="#666"/>`)}</button>
        </div>
      </div>
      <div class="tabsbar">
        <div class="arrows">${icon(6, 10, svg`<path d="M6 0v10L0 5z" fill="#bbb"/>`)}${icon(6, 10, svg`<path d="M0 0v10l6-5z" fill="#bbb"/>`)}</div>
        <button class="tab">Sheet1</button>
        <button class="plus" aria-label="New sheet">${icon(20, 20, svg`<circle cx="10" cy="10" r="9.500" stroke="#777"/><path d="M10 5v10M5 10h10" stroke="#777" stroke-width="1.500"/>`)}</button>
        <span class="grow"></span>
        ${icon(3, 14, svg`<path d="M0 0h3v3H0zM0 5h3v3H0zM0 10h3v3H0z" fill="#aaa"/>`)}
        <div class="hs"><button aria-label="Left">${icon(6, 9, svg`<path d="M6 0v9L0 4.500z" fill="#666"/>`)}</button><i></i><b></b><button aria-label="Right">${icon(6, 9, svg`<path d="M0 0v9l6-4.500z" fill="#666"/>`)}</button></div>
      </div>
      <footer class="status">
        ${icon(15, 15, svg`<rect x="1.500" y="4.500" width="13" height="10" fill="#fff" stroke="#555"/><path d="M7 2h8" stroke="#555" stroke-width="4"/><circle cx="3.500" cy="3.500" r="3.500" fill="#555"/><path d="M4 8.500h9M4 11.500h9" stroke="#555" stroke-dasharray="2 1.500"/>`)}
        <span class="grow"></span>
        <span>Loading .Net Framework...</span><span class="count">Count: 5</span>
        <button class="disp">${icon(20, 18, svg`<path d="M0 1h19v12H0zM5 15h6v2H5z" fill="#4a4a4a"/><circle cx="14" cy="12" r="4" fill="#f1f1f1" stroke="#4a4a4a" stroke-width="2.500"/><path d="M14 6v3M14 15v3M8 12h3M17 12h3" stroke="#4a4a4a" stroke-width="2"/><circle cx="14" cy="12" r="2" fill="#f1f1f1"/>`)}Display Settings</button>
        <button class="view on" aria-label="Normal">${icon(17, 16, svg`<path d="M.5 .5h16v15H.5zM.5 5.500h16M.5 10.500h16M6 .5v15M11 .5v15" stroke="#666"/>`)}</button>
        <button class="view" aria-label="Page layout">${icon(17, 16, svg`<path d="M.5 .5h16v15H.5zM4 2.500h9v11H4zM6 5.500h5M6 8h5M6 10.500h5" stroke="#666"/>`)}</button>
        <button class="view" aria-label="Page break">${icon(17, 16, svg`<path d="M.5 .5h16v15H.5zM4.500 .5v9h8v-9M8.500 .5v9" stroke="#666"/>`)}</button>
        <button class="out" aria-label="Zoom out">${icon(10, 10, svg`<path d="M0 5h10" stroke="#666" stroke-width="2"/>`)}</button>
        <input class="zoom" type="range" min="0" max="100" value="50" aria-label="Zoom" />
        <button aria-label="Zoom in">${icon(10, 10, svg`<path d="M0 5h10M5 0v10" stroke="#666" stroke-width="1.800"/>`)}</button>
        <span class="pct">100%</span>
      </footer>
      <div class="taskbar">
        <button class="sys" aria-label="Start">${icon(20, 20, svg`<path d="M0 3l8-1v7.500H0zM9 1.800L20 0v9.500H9zM0 10.500h8V18l-8-1zM9 10.500h11V20L9 18.200z" fill="#fff"/>`)}</button>
        <button class="sys" aria-label="Search">${icon(20, 20, svg`<circle cx="10" cy="10" r="8.500" stroke="#fff" stroke-width="2.200"/>`)}</button>
        <button class="sys" aria-label="Task view">${icon(20, 20, svg`<path d="M1 0v3.500h12V0M1 6h12v8H1zM1 20v-3.500h12V20M18 0v5M18 9v11M16 7h3" stroke="#fff" stroke-width="1.300"/>`)}</button>
        ${TASKS.map((t) => html`<button class="app ${t.run ? "run" : ""} ${t.on ? "on" : ""}" aria-label=${t.n}>${t.i}</button>`)}
        <span class="grow"></span>
        <div class="tray">
          ${icon(16, 10, svg`<path d="M1 9l7-7 7 7" stroke="#fff" stroke-width="1.400"/>`)}
          ${icon(22, 14, svg`<path d="M5 13a5 4 0 010-8 6 6 0 0111-1 5 5 0 011 9z" fill="#1380dc"/><path d="M5 13l9-6 6 5-3 1.500z" fill="#37a9f0"/>`)}
          ${icon(22, 16, svg`<rect x="6" y="4" width="13" height="9" fill="#fff"/><path d="M4 2.500h15.500v12H3V9M20 6v5M1 1v4h4V1M3 5v4" stroke="#fff"/>`)}
          ${icon(20, 18, svg`<circle cx="17" cy="15.500" r="1.500" fill="#fff"/><path d="M3 17C3 8 9 2 18 2" stroke="#888" stroke-width="1.500"/><path d="M7 17c0-6 5-11 11-11M11 17c0-4 3-7 7-7" stroke="#fff" stroke-width="1.500"/>`)}
          ${icon(20, 18, svg`<path d="M1 6h3l4-4v14l-4-4H1zM11 6q2 3 0 6M14 4q3 5 0 10" stroke="#fff" stroke-width="1.200"/><path d="M17 2q4 7 0 14" stroke="#777"/>`)}
          <button class="clock"><span>14:15</span><span>31/08/2020</span></button>
        </div>
        <button class="note" aria-label="Notifications">${icon(32, 34, svg`<path d="M2 4h20v17h-6l-5 5v-5H2z" fill="#fff"/><path d="M6 9h12M6 13h12M6 17h8" stroke="#050d13" stroke-width="1.500"/><circle cx="20" cy="23" r="9.500" fill="#333" stroke="#888"/><text x="20" y="28" text-anchor="middle" class="it ib" font-size="14" fill="#fff">6</text>`)}</button>
        <span class="edge"></span>
      </div>
      <query-editor></query-editor>
    `;
  }
}
